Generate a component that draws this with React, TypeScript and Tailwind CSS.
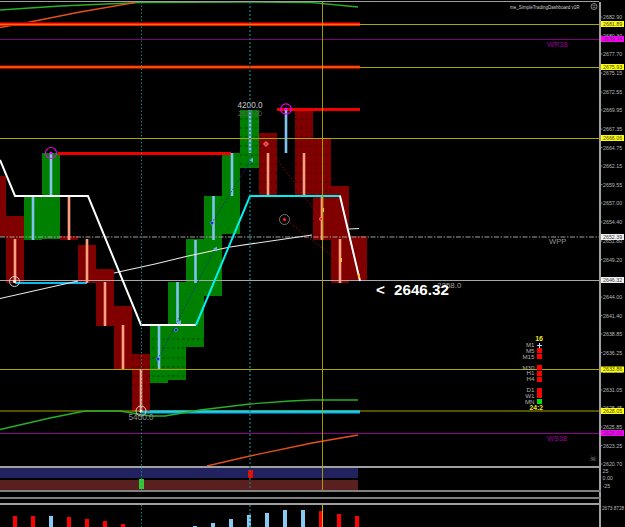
// Trading chart screenshot: main price pane, signal bands, histogram pane, price axis.
import React from "react";

type Candle = { x: number; w: number; top: number; bottom: number; up: boolean };
type Wick = { x: number; y1: number; y2: number; up: boolean };

const candles: Candle[] = [
  { x: 0, w: 6, top: 176, bottom: 217, up: false },
  { x: 0, w: 24, top: 216, bottom: 237, up: false },
  { x: 6, w: 18, top: 236, bottom: 283, up: false },
  { x: 24, w: 18, top: 196, bottom: 240, up: true },
  { x: 42, w: 18, top: 153, bottom: 239, up: true },
  { x: 60, w: 18, top: 236, bottom: 240, up: false },
  { x: 78, w: 18, top: 245, bottom: 283, up: false },
  { x: 96, w: 18, top: 269, bottom: 326, up: false },
  { x: 114, w: 18, top: 306, bottom: 370, up: false },
  { x: 132, w: 18, top: 354, bottom: 412, up: false },
  { x: 150, w: 18, top: 325, bottom: 383, up: true },
  { x: 168, w: 18, top: 282, bottom: 380, up: true },
  { x: 186, w: 18, top: 239, bottom: 347, up: true },
  { x: 204, w: 18, top: 196, bottom: 296, up: true },
  { x: 222, w: 18, top: 153, bottom: 234, up: true },
  { x: 240, w: 19, top: 110, bottom: 168, up: true },
  { x: 259, w: 18, top: 133, bottom: 196, up: false },
  { x: 295, w: 18, top: 110, bottom: 196, up: false },
  { x: 313, w: 18, top: 138, bottom: 240, up: false },
  { x: 331, w: 18, top: 186, bottom: 283, up: false },
  { x: 349, w: 18, top: 236, bottom: 281, up: false },
];

const wicks: Wick[] = [
  { x: 15, y1: 239, y2: 283, up: false },
  { x: 33, y1: 196, y2: 240, up: true },
  { x: 51, y1: 153, y2: 196, up: true },
  { x: 69, y1: 196, y2: 240, up: false },
  { x: 87, y1: 239, y2: 283, up: false },
  { x: 105, y1: 282, y2: 326, up: false },
  { x: 123, y1: 325, y2: 369, up: false },
  { x: 141, y1: 369, y2: 412, up: false },
  { x: 159, y1: 325, y2: 369, up: true },
  { x: 177.5, y1: 282, y2: 325, up: true },
  { x: 195.5, y1: 240, y2: 283, up: true },
  { x: 213.5, y1: 196, y2: 240, up: true },
  { x: 232, y1: 153, y2: 196, up: true },
  { x: 250, y1: 110, y2: 153, up: true },
  { x: 268, y1: 153, y2: 196, up: false },
  { x: 286, y1: 110, y2: 153, up: true },
  { x: 304, y1: 153, y2: 196, up: false },
  { x: 322, y1: 196, y2: 240, up: false },
  { x: 340, y1: 239, y2: 283, up: false },
];

const dashRows = [119, 128, 137, 146, 155, 164, 173, 182, 191];
const lowDashRows = [339, 348, 358, 367, 376, 385, 394, 403];

const oliveLevels = [24.5, 67.5, 138.5, 369.5, 411];

const axisTicks: [string, number][] = [
  ["2682.90", 17], ["2680.30", 36], ["2677.70", 54], ["2675.15", 73], ["2672.55", 92],
  ["2669.95", 110], ["2667.35", 129], ["2664.75", 147.5], ["2662.15", 166], ["2659.55", 184.5],
  ["2657.00", 203], ["2654.40", 222], ["2651.80", 241], ["2649.20", 259.5], ["2644.00", 297],
  ["2641.40", 315.5], ["2638.85", 334], ["2636.25", 352.5], ["2633.65", 371], ["2631.05", 390],
  ["2628.45", 408], ["2625.85", 427], ["2623.25", 445.5], ["2620.70", 464],
];

const axisTags: [string, number, string][] = [
  ["2681.89", 24, "#ffff00"], ["2679.74", 39, "#ff00ff"], ["2675.93", 67, "#ffff00"],
  ["2666.06", 138, "#ffff00"], ["2652.39", 237, "#f0f0f0"], ["2646.32", 280, "#f0f0f0"],
  ["2633.86", 369.5, "#ffff00"], ["2628.05", 411, "#ffff00"], ["2625.05", 433, "#ff00ff"],
];

// one slot per bar, 18px apart, height in px
const histogram: [number, string][] = [
  [11, "#ff0000"], [11, "#ff0000"], [11, "#87cbf5"], [10, "#ff0000"], [8, "#ff0000"], [6, "#ff0000"], [3, "#ff0000"],
  [0, "#000000"], [0, "#000000"], [0, "#000000"],
  [1, "#87cbf5"], [4, "#87cbf5"], [8, "#87cbf5"], [12, "#87cbf5"], [14, "#87cbf5"], [17, "#87cbf5"], [17, "#87cbf5"],
  [16, "#ff0000"], [13, "#ff0000"], [11, "#ff0000"],
];

const signalGroups: [string, string][][] = [
  [["M1", "plus"], ["M5", "#ff0000"], ["M15", "#ff0000"]],
  [["M30", "#ff0000"], ["H1", "#ff0000"], ["H4", "#ff0000"]],
  [["D1", "#ff0000"], ["W1", "#ff0000"], ["MN", "#00e000"]],
];

function MainChart() {
  return (
    <svg className="block w-[599px] h-[464px]" viewBox="0 2 599 464">
      {/* moving averages at the top */}
      <polyline points="0,10 60,6 140,2.5 240,2 312,2.5 358,7" fill="none" stroke="#28b028" strokeWidth="1.3" />
      <polyline points="0,27.5 30,22 80,12 135,2.5" fill="none" stroke="#e8501a" strokeWidth="1.3" />

      {candles.map((c, i) => (
        <rect key={i} x={c.x} y={c.top} width={c.w} height={c.bottom - c.top} fill={c.up ? "#008000" : "#800000"} />
      ))}
      {dashRows.map((y) => (
        <line key={y} x1="240" x2="332" y1={y} y2={y} stroke="#000" strokeOpacity="0.65" strokeWidth="0.7" strokeDasharray="2.5 2.5" />
      ))}
      {lowDashRows.map((y) => (
        <line key={y} x1="132" x2="205" y1={y} y2={y} stroke="#000" strokeOpacity="0.65" strokeWidth="0.7" strokeDasharray="2.5 2.5" />
      ))}

      {oliveLevels.map((y) => (
        <line key={y} x1="0" x2="599" y1={y} y2={y} stroke="#a8a800" strokeWidth="1" />
      ))}
      <line x1="0" x2="599" y1="39.5" y2="39.5" stroke="#800080" strokeWidth="1" />
      <line x1="0" x2="599" y1="433.5" y2="433.5" stroke="#900090" strokeWidth="1" />
      <line x1="0" x2="599" y1="280.5" y2="280.5" stroke="#a8a8a8" strokeWidth="1" />
      <line x1="0" x2="599" y1="237" y2="237" stroke="#a0a0a0" strokeWidth="1" strokeDasharray="5 1.5 1.5 1.5" />

      {/* support and resistance bars */}
      <rect x="0" y="22" width="360" height="1" fill="#8a0000" />
      <rect x="0" y="23" width="360" height="3" fill="#ff1000" />
      <rect x="0" y="23.9" width="360" height="0.8" fill="#ffa000" />
      <rect x="0" y="65.6" width="360" height="3" fill="#ff1000" />
      <rect x="0" y="66.6" width="360" height="0.8" fill="#ffa000" />
      <rect x="277" y="108" width="83" height="3" fill="#f00000" />
      <rect x="58" y="152" width="173" height="3" fill="#f00000" />
      <rect x="15" y="282" width="72" height="2" fill="#10b8f0" />
      <rect x="141" y="411" width="219" height="2.5" fill="#10b8f0" />
      <rect x="150" y="410.5" width="210" height="1" fill="#20f0f0" />

      {wicks.map((w) => (
        <line key={w.x} x1={w.x} x2={w.x} y1={w.y1} y2={w.y2} stroke={w.up ? "#7fc4f0" : "#ff9f7f"} strokeWidth="2.6" />
      ))}

      {/* white average */}
      <polyline points="0,298.5 78,281" fill="none" stroke="#e8e8e8" strokeWidth="1.2" />
      <polyline points="114,273 155,264 186,256.5 230,247 312,235" fill="none" stroke="#e8e8e8" strokeWidth="1.2" />
      <polyline points="349,229 359,228.5" fill="none" stroke="#e8e8e8" strokeWidth="1.2" />

      {/* lower averages */}
      <polyline points="0,429.5 50,418 85,411 120,411 150,416 165,416 200,410 250,404 290,401 312,400 358,400" fill="none" stroke="#28b028" strokeWidth="1.3" />
      <polyline points="207,466 250,456 312,443 358,435" fill="none" stroke="#e8501a" strokeWidth="1.3" />

      {/* dotted swing links */}
      <polyline points="158,359 215,249" fill="none" stroke="#1a2a9a" strokeWidth="0.9" strokeDasharray="1.5 1.5" />
      <polyline points="212,223 251,160" fill="none" stroke="#1a2a9a" strokeWidth="0.9" strokeDasharray="1.5 1.5" />
      <polyline points="266,144 321,219" fill="none" stroke="#c00000" strokeWidth="0.9" strokeDasharray="1.5 2" />
      <polyline points="285,219 340,262" fill="none" stroke="#c00000" strokeWidth="0.9" strokeDasharray="1.5 2" />

      {/* stair line */}
      <polyline points="0,160 15,196 88,196 141,325 196,325" fill="none" stroke="#ffffff" strokeWidth="2" />
      <polyline points="196,325 250,196 341,196" fill="none" stroke="#00f0f0" strokeWidth="2" />
      <polyline points="340,196 360,281" fill="none" stroke="#ffffff" strokeWidth="2" />

      {/* markers */}
      <circle cx="51" cy="153" r="5.5" fill="none" stroke="#f000f0" strokeWidth="1.1" />
      <circle cx="51" cy="153" r="1.6" fill="#ff00ff" />
      <circle cx="286" cy="109" r="5.2" fill="none" stroke="#f000f0" strokeWidth="1.2" />
      <circle cx="286" cy="109" r="1.6" fill="#ff00ff" />
      <circle cx="14.5" cy="281.5" r="5" fill="none" stroke="#d0d0d0" strokeWidth="1" />
      <circle cx="14.5" cy="281.5" r="1.4" fill="#ffffff" />
      <circle cx="141" cy="411" r="5" fill="none" stroke="#d0d0d0" strokeWidth="1" />
      <circle cx="141" cy="411.5" r="1.4" fill="#ffffff" />
      <circle cx="284.5" cy="219.5" r="5" fill="none" stroke="#909090" strokeWidth="0.8" />
      <circle cx="284.5" cy="219.5" r="1.6" fill="#ff2020" />
      <path d="M266 141.5 L268.5 144 L266 146.5 L263.5 144 Z" fill="#ff2020" stroke="#ffd0d0" strokeWidth="0.6" />
      <circle cx="321" cy="219" r="1.6" fill="#ff2020" stroke="#ffb0a0" strokeWidth="0.5" />
      <circle cx="212" cy="223" r="1.6" fill="#1a20e0" stroke="#80a0f0" strokeWidth="0.5" />
      <circle cx="176" cy="330" r="1.6" fill="#1a20e0" stroke="#80a0f0" strokeWidth="0.5" />
      <circle cx="158" cy="359" r="1.6" fill="#1a20e0" stroke="#80a0f0" strokeWidth="0.5" />
      <path d="M217 246.5 V251.5 L213 249 Z" fill="#6cb0e8" />
      <path d="M253 157.5 V162.5 L249 160 Z" fill="#6cb0e8" />
      <path d="M181 320 V325 L177 322.5 Z" fill="#6cb0e8" />
      <rect x="322" y="208" width="2" height="4" fill="#ffc040" />
      <rect x="340" y="258" width="2" height="4" fill="#ffc040" />
      <rect x="358" y="274" width="2" height="4" fill="#ffc040" />

      {/* labels */}
      <text x="250" y="108" textAnchor="middle" fontSize="8.2" fill="#c8c8c8">4200.0</text>
      <text x="250" y="116" textAnchor="middle" fontSize="6.6" fill="#606060">2675.00</text>
      <text x="141" y="419.5" textAnchor="middle" fontSize="8.2" fill="#909090">5400.0</text>
      <text x="437" y="288" fontSize="8" fill="#a0a0a0">2258.0</text>
      <text x="376" y="294.5" fontSize="15.2" fontWeight="700" fill="#ffffff">{"<"}</text>
      <text x="394" y="294.5" fontSize="15.2" fontWeight="700" fill="#ffffff">2646.32</text>
      <text x="547" y="47" fontSize="7.4" fill="#a000a0">WR38</text>
      <text x="549" y="244" fontSize="7.6" fill="#909090">WPP</text>
      <text x="547" y="441" fontSize="7.4" fill="#a000a0">WS38</text>
      <text x="510" y="8.5" fontSize="4.55" fill="#d0d0d0">me_SimpleTradingDashboard v1R</text>
      <circle cx="594" cy="6.5" r="3" fill="none" stroke="#c0c0c0" strokeWidth="0.7" />
      <path d="M592.6 5.6 H595.4 M592.6 7.4 H595.4" stroke="#c0c0c0" strokeWidth="0.6" />
      <text x="593" y="461" textAnchor="middle" fontSize="8" fill="#808080" className="font-['DejaVu_Sans',sans-serif]">☠</text>
    </svg>
  );
}

function PriceAxis() {
  return (
    <svg className="block w-[24px] h-[464px]" viewBox="601 2 24 464">
      {axisTicks.map(([label, y]) => (
        <g key={label}>
          <line x1="601" x2="602.5" y1={y} y2={y} stroke="#a0a0a0" strokeWidth="0.8" />
          <text x="603" y={y + 2} fontSize="5.3" fill="#b8b8b8">{label}</text>
        </g>
      ))}
      {axisTags.map(([label, y, color]) => (
        <g key={label}>
          <rect x="601" y={y - 3} width="23" height="6" fill={color} />
          <text x="603" y={y + 1.9} fontSize="5.3" fill="#404040">{label}</text>
        </g>
      ))}
    </svg>
  );
}

function SignalPanel() {
  return (
    <div className="absolute left-[520px] top-[335px] w-[23px] flex flex-col items-end text-[6.2px] leading-none text-[#b0b0b0]">
      <div className="h-[7.5px] text-[7px] font-bold text-[#f0e830]">16</div>
      <div className="flex flex-col gap-[5.6px] w-full">
        {signalGroups.map((group, i) => (
          <div key={i} className="flex flex-col w-full">
            {group.map(([name, state]) => (
              <div key={name} className="h-[5.65px] flex items-center justify-end gap-[2.5px] pr-px">
                <span>{name}</span>
                {state === "plus" ? (
                  <svg className="block w-[5px] h-[5px]" viewBox="0 0 5 5">
                    <path d="M2.5 0 V5 M0 2.5 H5" stroke="#c8e0ff" strokeWidth="1" />
                  </svg>
                ) : (
                  <span className="block w-[5px] h-[5px]" style={{ backgroundColor: state }} />
                )}
              </div>
            ))}
          </div>
        ))}
      </div>
      <div className="h-[6px] mt-[1px] text-[6.7px] font-bold text-[#f0e830]">24:2</div>
    </div>
  );
}

export default function App() {
  return (
    <div className="relative w-[625px] h-[527px] overflow-hidden bg-black font-['Liberation_Sans',Arial,sans-serif]">
      <div className="h-[1px]" />
      <div className="h-[1px] w-[599px] bg-[#a0a0a0]" />

      <div className="flex h-[464px]">
        <MainChart />
        <div className="w-[26px] border-l-2 border-[#a0a0a0]">
          <PriceAxis />
        </div>
      </div>

      <div className="h-[2px] w-[601px] bg-[#a0a0a0]" />

      <div className="flex h-[22px]">
        <div className="relative w-[599px]">
          <div className="h-[10px] w-[358px] bg-[#22225e]" />
          <div className="h-[2px]" />
          <div className="h-[10px] w-[358px] bg-[#5a2020]" />
          <div className="absolute left-[139px] top-[10.5px] w-[5px] h-[10px] bg-[#33cc33]" />
          <div className="absolute left-[247.5px] top-[2px] w-[5px] h-[8px] bg-[#ff0000]" />
        </div>
        <div className="w-[26px] border-l-2 border-[#a0a0a0] pl-[1.5px] flex flex-col justify-around text-[5.3px] leading-none text-[#b8b8b8]">
          <span>25</span>
          <span>0.00</span>
          <span>-25</span>
        </div>
      </div>

      <div className="h-[2px] w-[601px] bg-[#808080]" />
      <div className="h-[5px] w-[601px] flex justify-end">
        <div className="w-[2px] bg-[#a0a0a0]" />
      </div>
      <div className="h-[2px] w-[601px] bg-[#808080]" />
      <div className="h-[4px] w-[601px] flex justify-end">
        <div className="w-[2px] bg-[#a0a0a0]" />
      </div>
      <div className="h-[2px] w-[601px] bg-[#a0a0a0]" />

      <div className="flex h-[22px]">
        <div className="w-[599px] pl-[6px] flex items-end">
          {histogram.map(([height, color], i) => (
            <div key={i} className="w-[18px] flex justify-center">
              <div className="w-[4px]" style={{ height, backgroundColor: color }} />
            </div>
          ))}
        </div>
        <div className="w-[26px] border-l-2 border-[#a0a0a0] pl-[1px] pt-[2px] whitespace-nowrap text-[4.7px] leading-none text-[#b8b8b8]">
          2673.8728
        </div>
      </div>

      {/* cursor and session lines run through every pane */}
      <svg className="absolute left-0 top-0 w-[599px] h-[527px] pointer-events-none" viewBox="0 0 599 527">
        <line x1="141.5" x2="141.5" y1="2" y2="490" stroke="#1a9a9a" strokeWidth="0.8" strokeDasharray="1.5 2" />
        <line x1="141.5" x2="141.5" y1="505" y2="527" stroke="#1a9a9a" strokeWidth="0.8" strokeDasharray="1.5 2" />
        <line x1="250" x2="250" y1="2" y2="490" stroke="#0c7c7c" strokeWidth="1.3" strokeDasharray="2 2" />
        <line x1="250" x2="250" y1="505" y2="527" stroke="#0c7c7c" strokeWidth="1.3" strokeDasharray="2 2" />
        <line x1="322.5" x2="322.5" y1="2" y2="490" stroke="#b0a800" strokeWidth="0.9" />
        <line x1="322.5" x2="322.5" y1="505" y2="527" stroke="#d0c000" strokeWidth="0.9" />
      </svg>

      <SignalPanel />
    </div>
  );
}
